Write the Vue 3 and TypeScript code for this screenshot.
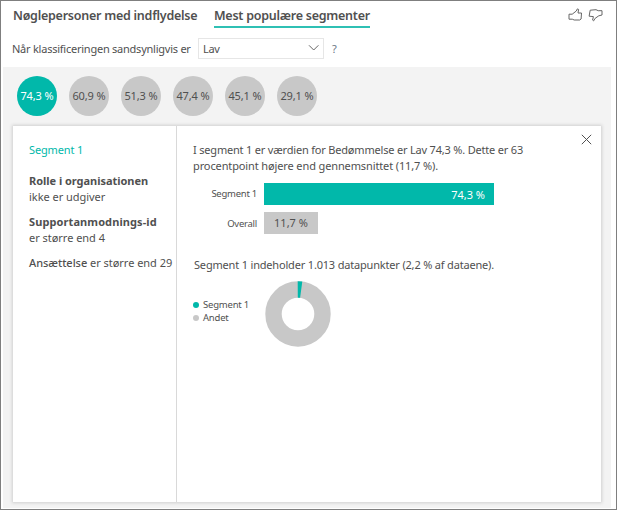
<script setup lang="ts">
import { ref } from 'vue'

interface Segment {
  label: string
}

const segments: Segment[] = [
  { label: '74,3 %' },
  { label: '60,9 %' },
  { label: '51,3 %' },
  { label: '47,4 %' },
  { label: '45,1 %' },
  { label: '29,1 %' },
]
const selected = ref(0)
</script>

<template>
  <div class="visual">
    <header class="tabs">
      <span class="tab first">Nøglepersoner med indflydelse</span>
      <span class="tab active">Mest populære segmenter</span>
      <div class="feedback">
        <svg width="15" height="14" viewBox="0 0 15 14">
          <path d="M1 6.2 H4.2 L8.3 3 L9.3 0.9 L10.6 1.4 L10 5 H13.5 L13.1 11 L11.7 12 H6.2 L4.3 11.2 H1 Z" />
        </svg>
        <svg width="15" height="14" viewBox="0 0 15 14">
          <path d="M2.2 2.2 L8 1.7 L10.2 2.7 H14 V7 L10.8 7.8 L7.2 10.3 L5.6 12.9 L4.6 12.1 L5.4 8.6 L1.1 8.2 Z" />
        </svg>
      </div>
    </header>

    <div class="question">
      <span class="q-label">Når klassificeringen sandsynligvis er</span>
      <div class="select">
        <span>Lav</span>
        <svg width="12" height="8" viewBox="0 0 12 8"><path d="M1 1.3 L5.7 6 L10.4 1.3" /></svg>
      </div>
      <span class="help">?</span>
    </div>

    <main class="body">
      <div class="bubbles">
        <button
          v-for="(s, i) in segments"
          :key="s.label"
          class="bubble"
          :class="{ on: i === selected }"
          @click="selected = i"
        >{{ s.label }}</button>
      </div>

      <section class="card">
        <aside class="rules">
          <div class="seg-title">Segment 1</div>
          <div class="rule">
            <div><b>Rolle i organisationen</b></div>
            <div>ikke er udgiver</div>
          </div>
          <div class="rule">
            <div><b class="wide">Supportanmodnings-id</b></div>
            <div>er større end 4</div>
          </div>
          <div class="rule last"><span class="medium">Ansættelse</span> er større end 29</div>
        </aside>

        <div class="detail">
          <svg class="close" width="11" height="11" viewBox="0 0 11 11"><path d="M0.8 0.8 L10.2 10.2 M10.2 0.8 L0.8 10.2" /></svg>
          <div class="summary">
            <div class="s1">I segment 1 er værdien for Bedømmelse er Lav 74,3 %. Dette er 63</div>
            <div class="s2">procentpoint højere end gennemsnittet (11,7 %).</div>
          </div>
          <div class="bars">
            <div class="bar-row">
              <span class="bar-name">Segment 1</span>
              <div class="bar teal">74,3 %</div>
            </div>
            <div class="bar-row">
              <span class="bar-name overall">Overall</span>
              <div class="bar grey">11,7 %</div>
            </div>
          </div>
          <div class="count">Segment 1 indeholder 1.013 datapunkter (2,2 % af dataene).</div>
          <div class="share">
            <ul class="legend">
              <li><i class="dot teal-dot"></i><span>Segment 1</span></li>
              <li><i class="dot"></i><span>Andet</span></li>
            </ul>
            <svg class="donut" width="66" height="66" viewBox="0 0 66 66">
              <circle cx="33" cy="33" r="24.5" fill="none" stroke="#c8c8c8" stroke-width="16.4" />
              <path d="M32.7 0.3 A32.7 32.7 0 0 1 37.3 0.6 L35.1 16.8 A16.3 16.3 0 0 0 32.8 16.7 Z" fill="#01b8aa" />
            </svg>
          </div>
        </div>
      </section>
    </main>
  </div>
</template>

<style>
body {
  margin: 0;
  background: #fff;
}
</style>

<style scoped>
.visual {
  box-sizing: border-box;
  width: 617px;
  height: 510px;
  border: 1px solid #7f7f7f;
  background: #fff;
  font-family: 'Noto Sans', 'Open Sans', sans-serif;
  font-size: 11px;
  color: #505050;
  overflow: hidden;
  white-space: nowrap;
}
.tabs {
  display: flex;
  height: 28px;
  padding-left: 12px;
}
.tab {
  box-sizing: border-box;
  flex: none;
  height: 27px;
  padding-top: 6px;
  font-size: 12.5px;
  line-height: 18px;
  font-weight: 600;
  letter-spacing: -0.25px;
}
.first {
  width: 201px;
}
.active {
  width: 156px;
  border-bottom: 2px solid #2fc0b4;
}
.feedback {
  display: flex;
  gap: 5px;
  margin: 7px 0 0 198px;
}
.feedback path {
  fill: none;
  stroke: #666;
  stroke-width: 1;
  stroke-linejoin: round;
}
.question {
  display: flex;
  align-items: center;
  height: 38px;
  padding: 0 0 0 11px;
}
.q-label {
  flex: none;
  width: 186px;
  padding-top: 1px;
  letter-spacing: -0.24px;
}
.select {
  box-sizing: border-box;
  display: flex;
  align-items: center;
  justify-content: space-between;
  width: 126px;
  height: 21px;
  padding: 0 3px 0 4px;
  border: 1px solid #e6e6e6;
}
.select span {
  letter-spacing: -0.3px;
}
.select path {
  fill: none;
  stroke: #666;
}
.help {
  margin: 0 0 0 8px;
  color: #6b7785;
}
.body {
  box-sizing: border-box;
  width: 608px;
  height: 441px;
  margin-left: 2px;
  padding: 9px 0 0 9px;
  background: #f3f3f3;
}
.bubbles {
  display: flex;
  gap: 12px;
  padding-left: 5px;
}
.bubble {
  width: 40px;
  height: 40px;
  padding: 0 0 1px;
  border: 0;
  border-radius: 50%;
  background: #c8c8c8;
  color: #505050;
  font: inherit;
  letter-spacing: -0.1px;
  white-space: nowrap;
}
.on {
  background: #01b8aa;
  color: #fff;
}
.card {
  display: flex;
  width: 588px;
  height: 376px;
  margin: 10px 0 0 1px;
  background: #fff;
  box-shadow: 0 0 3px 1px #cfcfcf;
}
.rules {
  box-sizing: border-box;
  flex: none;
  width: 164px;
  padding: 16px 0 0 16px;
  border-right: 1px solid #d9d9d9;
  line-height: 16px;
  letter-spacing: -0.03px;
}
.seg-title {
  margin-bottom: 15px;
  color: #01b8aa;
  letter-spacing: -0.15px;
}
.rule {
  margin-bottom: 9px;
}
.wide {
  letter-spacing: 0.1px;
}
.medium {
  font-weight: 500;
}
.detail {
  position: relative;
  box-sizing: border-box;
  width: 424px;
  padding: 16px 0 0 16px;
  line-height: 16px;
}
.close {
  position: absolute;
  top: 8px;
  right: 9px;
}
.close path {
  fill: none;
  stroke: #505050;
}
.s1 {
  letter-spacing: -0.19px;
}
.s2 {
  letter-spacing: -0.12px;
}
.bars {
  display: flex;
  flex-direction: column;
  gap: 7px;
  margin-top: 9px;
}
.bar-row {
  display: flex;
  height: 22px;
  line-height: 22px;
}
.bar-name {
  width: 64px;
  margin-right: 7px;
  text-align: right;
  font-size: 9.5px;
  letter-spacing: -0.25px;
}
.overall {
  padding-top: 1px;
}
.bar {
  box-sizing: border-box;
}
.teal {
  width: 230px;
  padding: 1px 9px 0 0;
  background: #01b8aa;
  color: #fff;
  text-align: right;
}
.grey {
  width: 54px;
  background: #c8c8c8;
  text-align: center;
}
.count {
  margin-top: 23px;
  padding-left: 1px;
  letter-spacing: -0.18px;
}
.share {
  display: flex;
  margin-top: 8px;
}
.legend {
  width: 71px;
  margin: 17px 0 0;
  padding: 0;
  list-style: none;
  font-size: 9.5px;
  line-height: 13px;
  letter-spacing: -0.2px;
}
.donut {
  margin-left: 1px;
}
.legend li {
  display: flex;
  align-items: center;
}
.dot {
  width: 6px;
  height: 6px;
  margin-right: 4px;
  border-radius: 50%;
  background: #c8c8c8;
}
.teal-dot {
  background: #01b8aa;
}
</style>
